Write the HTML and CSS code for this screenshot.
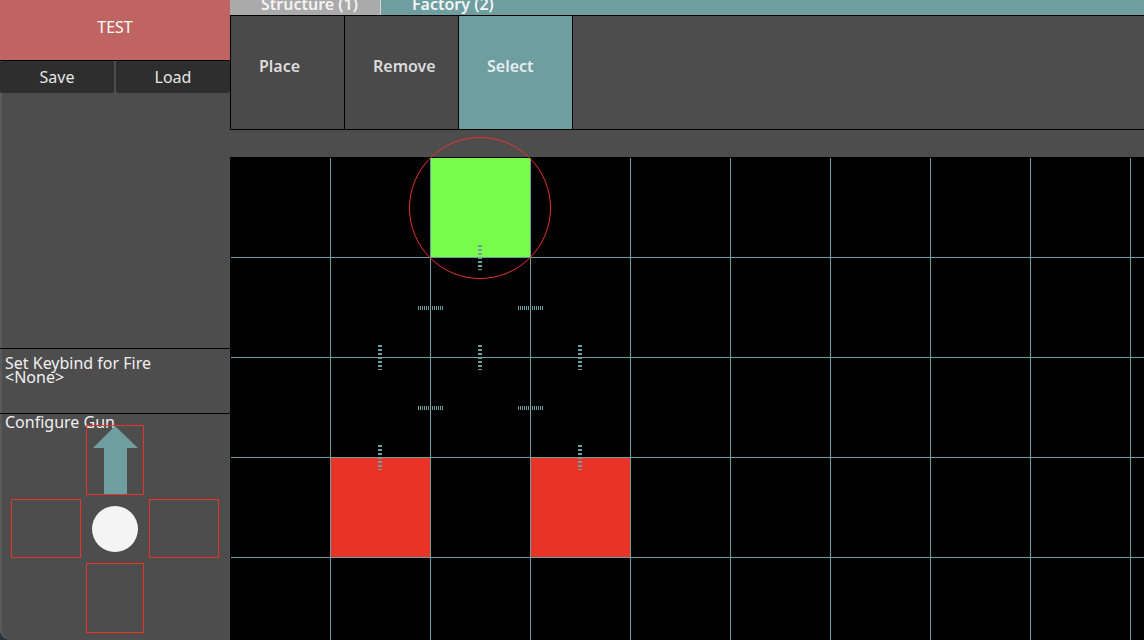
FILE: index.html
```html
<!DOCTYPE html>
<html lang="en">
<head>
<meta charset="utf-8">
<title>Factory editor</title>
<link rel="stylesheet" href="styles.css">
</head>
<body>
<div class="app">
  <aside class="sidebar">
    <div class="test">TEST</div>
    <div class="file-row">
      <div class="file-btn">Save</div>
      <div class="file-btn">Load</div>
    </div>
    <div class="spacer"></div>
    <div class="keybind">
      <div class="keybind-label">Set Keybind for Fire</div>
      <div class="keybind-label">&lt;None&gt;</div>
    </div>
    <div class="gun">
      <div class="gun-title">Configure Gun</div>
      <div class="pad">
        <div class="pad-box pad-up">
          <svg class="arrow" width="56" height="68" viewBox="0 0 56 68">
            <polygon points="28,0 51,22 40,22 40,68 17,68 17,22 6,22" fill="#6f9ea0"/>
          </svg>
        </div>
        <div class="pad-box pad-left"></div>
        <div class="pad-center"><div class="dot"></div></div>
        <div class="pad-box pad-right"></div>
        <div class="pad-box pad-down"></div>
      </div>
    </div>
  </aside>
  <main class="main">
    <div class="tabs">
      <div class="tab tab-structure"><span class="tab-label">Structure (1)</span></div>
      <div class="tab tab-factory"><span class="tab-label">Factory (2)</span></div>
    </div>
    <div class="tools">
      <div class="tool">Place</div>
      <div class="tool">Remove</div>
      <div class="tool tool-active">Select</div>
      <div class="tools-rest"></div>
    </div>
    <div class="board">
      <div class="block block-green" style="left:199px;top:0;width:101px;height:100px"></div>
      <div class="block block-red" style="left:100px;top:300px;width:100px;height:100px"></div>
      <div class="block block-red" style="left:300px;top:300px;width:100px;height:100px"></div>

      <div class="link link-v" style="left:247px;top:87px"></div>
      <div class="link link-h" style="left:187px;top:148px"></div>
      <div class="link link-h" style="left:287px;top:148px"></div>
      <div class="link link-v" style="left:147px;top:187px"></div>
      <div class="link link-v" style="left:247px;top:187px"></div>
      <div class="link link-v" style="left:347px;top:187px"></div>
      <div class="link link-h" style="left:187px;top:248px"></div>
      <div class="link link-h" style="left:287px;top:248px"></div>
      <div class="link link-v" style="left:147px;top:287px"></div>
      <div class="link link-v" style="left:347px;top:287px"></div>

      <div class="range" style="left:178px;top:-21px;width:142px;height:142px"></div>
    </div>
  </main>
</div>
</body>
</html>
```

FILE: styles.css
```css
* {
  box-sizing: border-box;
}

html, body {
  margin: 0;
  padding: 0;
}

body {
  width: 1144px;
  height: 640px;
  overflow: hidden;
  background: #26323c;
  font-family: "Noto Sans", "Open Sans", sans-serif;
  font-size: 16px;
  color: #f0f0f0;
}

.app {
  display: flex;
  width: 1144px;
  height: 640px;
}

/* ---------- sidebar ---------- */
.sidebar {
  width: 230px;
  height: 640px;
  flex: none;
  display: flex;
  flex-direction: column;
  background: #4d4d4d;
  border-bottom-left-radius: 10px;
  box-shadow: inset 2px 0 0 #5a5a5a;
}

.test {
  height: 61px;
  padding-top: 19px;
  background: #c06461;
  border-bottom: 1px solid #000;
  text-align: center;
  line-height: 16px;
  color: #fff;
}

.file-row {
  height: 32px;
  display: grid;
  grid-template-columns: 114px 114px;
  column-gap: 2px;
}

.file-btn {
  display: flex;
  align-items: center;
  justify-content: center;
  background: #2e2e2e;
  border-radius: 2px;
  line-height: 16px;
  color: #e6e6e6;
}

.spacer {
  height: 255px;
}

.keybind {
  height: 65px;
  border-top: 1px solid #000;
  padding: 7px 0 0 5px;
}

.keybind-label {
  line-height: 14px;
  white-space: nowrap;
}

.gun {
  flex: 1;
  border-top: 1px solid #000;
}

.gun-title {
  padding-left: 5px;
  line-height: 16px;
}

.pad {
  margin: -5px 0 0 11px;
  display: grid;
  grid-template-columns: 70px 58px 70px;
  grid-template-rows: 70px 4px 59px 5px 70px;
  column-gap: 5px;
}

.pad-box {
  border: 1px solid #e5352a;
}

.pad-up {
  grid-column: 2;
  grid-row: 1;
}

.pad-left {
  grid-column: 1;
  grid-row: 3;
}

.pad-center {
  grid-column: 2;
  grid-row: 3;
  display: flex;
  align-items: center;
  justify-content: center;
}

.pad-right {
  grid-column: 3;
  grid-row: 3;
}

.pad-down {
  grid-column: 2;
  grid-row: 5;
}

.arrow {
  display: block;
}

.dot {
  width: 46px;
  height: 46px;
  border-radius: 50%;
  background: #f4f4f4;
}

/* ---------- main ---------- */
.main {
  flex: 1;
  display: flex;
  flex-direction: column;
  background: #4d4d4d;
}

.tabs {
  height: 15px;
  display: flex;
  background: #6f9ea0;
  overflow: hidden;
}

.tab {
  height: 15px;
  padding-left: 31px;
  overflow: hidden;
  white-space: nowrap;
}

.tab-structure {
  width: 151px;
  background: #aaaaaa;
  border-right: 1px solid #d2d2d2;
}

.tab-factory {
  width: 150px;
}

.tab-label {
  display: block;
  margin-top: -4px;
  line-height: 16px;
  font-weight: 600;
  color: #f4f4f4;
}

.tools {
  height: 115px;
  display: flex;
  border: 1px solid #000;
  border-right: none;
  margin-bottom: 27px;
  background: #4d4d4d;
}

.tool {
  width: 114px;
  flex: none;
  border-right: 1px solid #000;
  background: #4a4a4a;
  padding: 42px 0 0 28px;
  line-height: 16px;
  font-weight: 600;
  color: #dcdcdc;
}

.tool-active {
  background: #6f9ea0;
  color: #e4eeee;
}

.tools-rest {
  flex: 1;
}

.board {
  flex: 1;
  position: relative;
  background: #000;
  border-top: 1px solid #000;
  border-left: 1px solid #000;
}

.board::after {
  content: "";
  position: absolute;
  inset: 0;
  z-index: 1;
  pointer-events: none;
  background-image:
    linear-gradient(to right, transparent 99px, #6f9ea0 99px),
    linear-gradient(to bottom, transparent 99px, #6f9ea0 99px);
  background-size: 100px 100px;
}

.block {
  position: absolute;
}

.block-green {
  background: #77fc4c;
}

.block-red {
  background: #e83326;
}

.link {
  position: absolute;
  z-index: 2;
}

.link-v {
  width: 4px;
  height: 25px;
  background: repeating-linear-gradient(to bottom, #6f9ea0 0 2px, transparent 2px 4px);
}

.link-h {
  width: 25px;
  height: 4px;
  background: repeating-linear-gradient(to right, #6f9ea0 0 1px, transparent 1px 2px, #6f9ea0 2px 3px, transparent 3px 4px);
  background-size: 4px 4px;
}

.range {
  position: absolute;
  z-index: 3;
  border: 1px solid #e8332a;
  border-radius: 50%;
}
```
